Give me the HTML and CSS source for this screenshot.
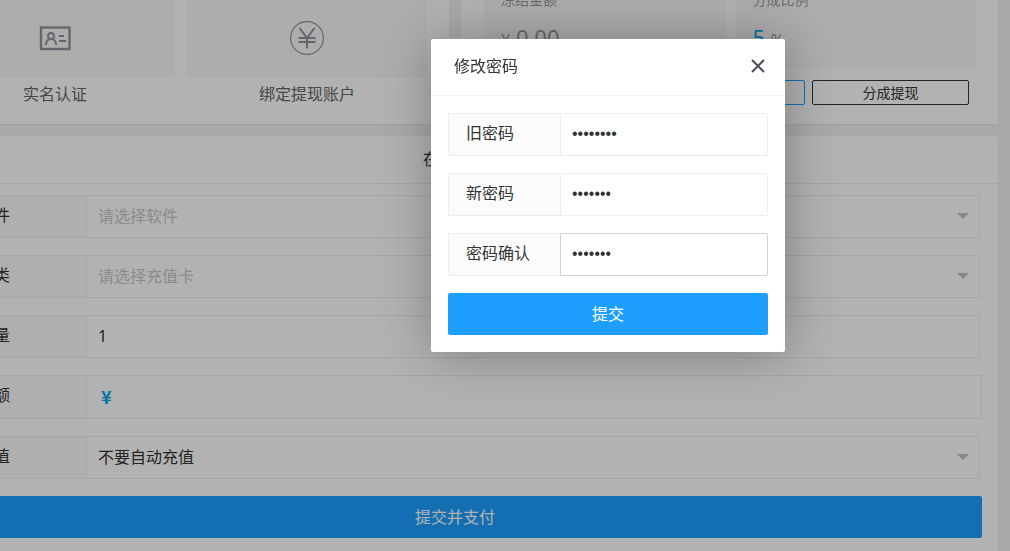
FILE: index.html
```html
<!DOCTYPE html>
<html lang="zh-CN">
<head>
    <meta charset="UTF-8">
    <meta name="viewport" content="width=device-width, initial-scale=1.0">
    <title>修改密码</title>
    <link rel="stylesheet" href="styles.css">
</head>
<body>
    <div class="page">
        <div class="cards">
            <div class="card shortcuts">
                <a href="#" class="shortcut">
                    <span class="tile">
                        <svg width="34" height="34" viewBox="0 0 34 34" fill="none" stroke="currentColor" stroke-width="2">
                            <rect x="3" y="6.500" width="28.500" height="21.500" stroke-width="2.400"/>
                            <circle cx="13" cy="15" r="3"/>
                            <path d="M8 24c0-4 2-6 5-6s5 2 5 6M21 15h5M21 20h7"/>
                        </svg>
                    </span>
                    <span class="caption">实名认证</span>
                </a>
                <a href="#" class="shortcut">
                    <span class="tile">
                        <svg width="34" height="34" viewBox="0 0 34 34" fill="none" stroke="currentColor" stroke-width="2">
                            <circle cx="17" cy="17" r="16.400" stroke-width="1.200"/>
                            <path d="M9.500 7L17 17l7.500-10M8.500 17h17M8.500 21h17M17 17v10.500"/>
                        </svg>
                    </span>
                    <span class="caption">绑定提现账户</span>
                </a>
            </div>
            <div class="card account">
                <div class="stats">
                    <div class="stat">
                        <h3>冻结金额</h3>
                        <p><small>¥</small> <span>0.00</span></p>
                    </div>
                    <div class="stat">
                        <h3>分成比例</h3>
                        <p><span class="blue">5</span> <small>%</small></p>
                    </div>
                </div>
                <div class="account-buttons">
                    <button type="button" class="outline outline-blue">余额提现</button>
                    <button type="button" class="outline">分成提现</button>
                </div>
            </div>
        </div>

        <div class="card">
            <h2>在线充值</h2>
            <form class="pay-form">
                <div class="row">
                    <label for="software">选择软件</label>
                    <div class="select-box">
                        <select id="software" class="empty">
                            <option>请选择软件</option>
                        </select>
                    </div>
                </div>
                <div class="row">
                    <label for="card-type">充值卡类</label>
                    <div class="select-box">
                        <select id="card-type" class="empty">
                            <option>请选择充值卡</option>
                        </select>
                    </div>
                </div>
                <div class="row">
                    <label for="amount">购买数量</label>
                    <input type="text" id="amount" value="1">
                </div>
                <div class="row total">
                    <label for="total">支付金额</label>
                    <output id="total">¥</output>
                </div>
                <div class="row">
                    <label for="auto">自动充值</label>
                    <div class="select-box">
                        <select id="auto">
                            <option>不要自动充值</option>
                        </select>
                    </div>
                </div>
                <button type="button" class="submit">提交并支付</button>
            </form>
        </div>
    </div>

    <div class="shade"></div>
    <div class="modal" role="dialog" aria-labelledby="modal-title">
        <div class="modal-header">
            <h2 id="modal-title">修改密码</h2>
            <button type="button" class="close" aria-label="关闭">
                <svg width="14" height="14" viewBox="0 0 14 14" fill="none" stroke="currentColor" stroke-width="2">
                    <path d="M1 1l12 12M13 1L1 13"/>
                </svg>
            </button>
        </div>
        <form class="modal-form">
            <div class="row">
                <label for="old-password">旧密码</label>
                <input type="password" id="old-password" value="12345678">
            </div>
            <div class="row">
                <label for="new-password">新密码</label>
                <input type="password" id="new-password" value="1234567">
            </div>
            <div class="row">
                <label for="confirm-password">密码确认</label>
                <input type="password" id="confirm-password" class="active" value="1234567">
            </div>
            <button type="button" class="submit">提交</button>
        </form>
    </div>
</body>
</html>
```

FILE: styles.css
```css
* {
    box-sizing: border-box;
}
body {
    margin: 0;
    overflow: hidden;
    background-color: #f2f2f2;
    color: #333;
    font-family: "Noto Sans", "Noto Sans CJK SC", sans-serif;
    font-size: 16px;
    line-height: 24px;
}
h2, h3, p {
    margin: 0;
    font-weight: 400;
}
button, input, select {
    font: inherit;
    color: inherit;
}
/* the panel is scrolled down and to the right */
.page {
    margin: -60px 12px 0 -88px;
}
.cards {
    display: grid;
    grid-template-columns: 1fr 1fr;
    gap: 12px;
    margin-bottom: 12px;
}
.card {
    background-color: #fff;
    border-radius: 2px;
    box-shadow: 0 1px 2px rgba(0, 0, 0, 0.05);
}
.shortcuts {
    display: grid;
    grid-template-columns: 1fr 1fr;
    gap: 12px;
    padding: 24px 22px 18px 23px;
}
.shortcut {
    color: #666;
    text-align: center;
    text-decoration: none;
}
.tile {
    display: flex;
    align-items: flex-end;
    justify-content: center;
    height: 114px;
    padding-bottom: 23px;
    background-color: #f8f8f8;
    border-radius: 2px;
    color: #8d969e;
}
.caption {
    display: block;
    padding-top: 4px;
}
.account {
    padding: 24px 22px 19px 23px;
}
.stats {
    display: grid;
    grid-template-columns: 1fr 1fr;
    gap: 11px;
}
.stat {
    height: 105px;
    padding: 24px 17px;
    background-color: #f8f8f8;
    border-radius: 2px;
    color: #999;
}
.stat h3 {
    font-size: 14px;
    line-height: 24px;
}
.stat p {
    padding-top: 8px;
    font-size: 22px;
    line-height: 34px;
}
.stat small {
    font-size: 16px;
}
.blue {
    color: #01aaed;
}
.account-buttons {
    display: flex;
    justify-content: flex-end;
    gap: 7px;
    padding: 11px 7px 0 0;
}
.outline {
    width: 157px;
    height: 25px;
    padding: 0;
    border: 1px solid #2f363c;
    border-radius: 2px;
    background: none;
    font-size: 14px;
    line-height: 22px;
}
.outline-blue {
    border-color: #1e9fff;
    color: #1e9fff;
}
.card h2 {
    height: 48px;
    border-bottom: 1px solid #f0f0f0;
    font-size: 16px;
    line-height: 47px;
    text-align: center;
}
.pay-form {
    display: grid;
    gap: 17px;
    padding: 11px 16px 17px;
}
.row {
    display: flex;
    height: 43px;
}
.row label {
    width: 112px;
    padding-left: 17px;
    border: 1px solid #eee;
    border-right: 0;
    border-radius: 2px 0 0 2px;
    background-color: #fbfbfb;
    line-height: 39px;
}
.row input, .select-box {
    flex: 1;
    min-width: 0;
    border: 1px solid #eee;
    border-radius: 0 2px 2px 0;
    background-color: #fff;
}
.row input {
    padding: 0 11px 2px;
    outline: none;
}
.row input.active {
    border-color: #d2d2d2;
}
.pay-form .row {
    margin-right: 2px;
}
.pay-form label {
    width: 158px;
}
.pay-form .total {
    height: 44px;
    margin-right: 0;
}
.total output {
    flex: 1;
    padding-left: 14px;
    border: 1px solid #eee;
    color: #01aaed;
    font-family: "Noto Sans CJK SC", sans-serif;
    font-size: 18px;
    font-weight: 700;
    line-height: 40px;
}
.select-box {
    position: relative;
}
.select-box select {
    width: 100%;
    height: 100%;
    padding: 0 11px 2px;
    border: 0;
    outline: none;
    appearance: none;
    background: none;
}
.select-box .empty {
    color: #c8c8c8;
}
.select-box::after {
    content: "";
    position: absolute;
    top: 17px;
    right: 10px;
    border: 6px solid transparent;
    border-top-color: #c2c2c2;
    border-bottom-width: 0;
    pointer-events: none;
}
.submit {
    height: 42px;
    border: 0;
    border-radius: 2px;
    background-color: #1e9fff;
    color: #fff;
}
.shade {
    position: fixed;
    inset: 0;
    background-color: rgba(0, 0, 0, 0.3);
}
.modal {
    position: fixed;
    top: 39px;
    left: 431px;
    width: 354px;
    border-radius: 2px;
    background-color: #fff;
    box-shadow: 1px 1px 50px rgba(0, 0, 0, 0.3);
}
.modal-header {
    display: flex;
    align-items: center;
    justify-content: space-between;
    height: 57px;
    padding: 0 20px 2px 23px;
    border-bottom: 1px solid #f0f0f0;
}
.modal-header h2 {
    font-size: 16px;
}
.close {
    display: flex;
    padding: 0;
    border: 0;
    background: none;
    color: #4d4d5c;
}
.modal-form {
    display: grid;
    grid-template-columns: minmax(0, 1fr);
    gap: 17px;
    padding: 17px;
}
.modal-form input {
    font-family: "Liberation Sans", sans-serif;
}
```
